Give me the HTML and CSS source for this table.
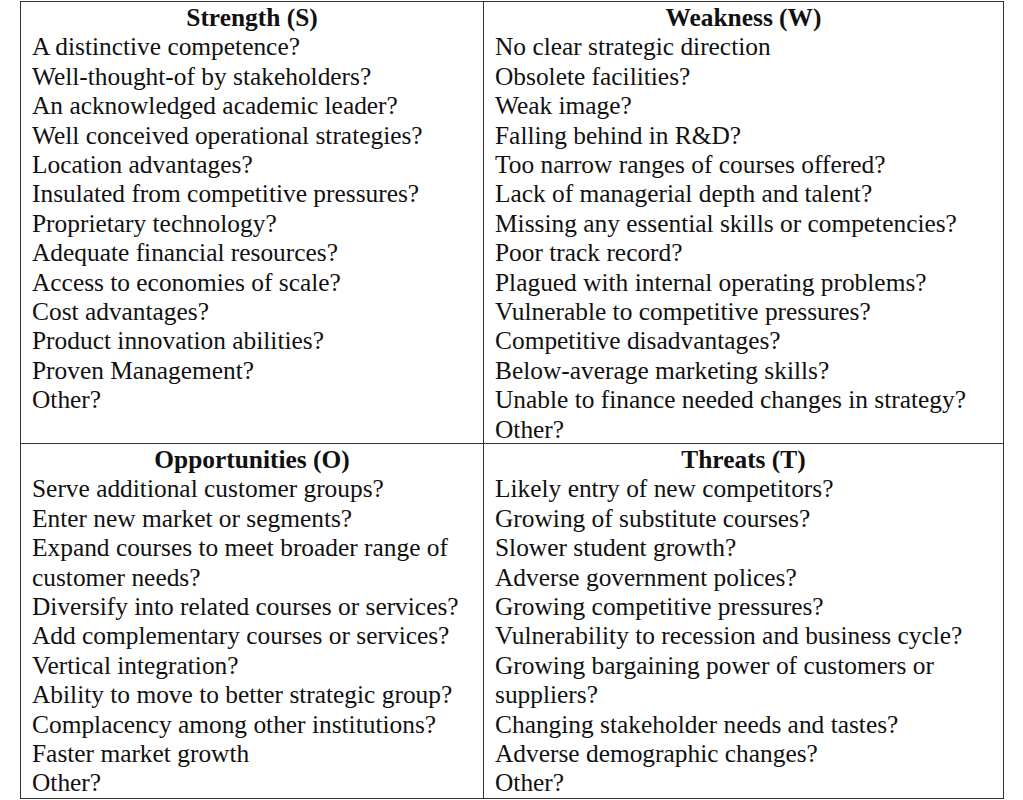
FILE: index.html
```html
<!DOCTYPE html>
<html lang="en">
<head>
<meta charset="utf-8">
<title>SWOT Analysis</title>
<link rel="stylesheet" href="styles.css">
</head>
<body>
<div class="swot">
  <div class="cell cell-left">
    <div class="head">Strength (S)</div>
    <div>A distinctive competence?</div>
    <div>Well-thought-of by stakeholders?</div>
    <div>An acknowledged academic leader?</div>
    <div>Well conceived operational strategies?</div>
    <div>Location advantages?</div>
    <div>Insulated from competitive pressures?</div>
    <div>Proprietary technology?</div>
    <div>Adequate financial resources?</div>
    <div>Access to economies of scale?</div>
    <div>Cost advantages?</div>
    <div>Product innovation abilities?</div>
    <div>Proven Management?</div>
    <div>Other?</div>
  </div>
  <div class="cell cell-right">
    <div class="head">Weakness (W)</div>
    <div>No clear strategic direction</div>
    <div>Obsolete facilities?</div>
    <div>Weak image?</div>
    <div>Falling behind in R&amp;D?</div>
    <div>Too narrow ranges of courses offered?</div>
    <div>Lack of managerial depth and talent?</div>
    <div>Missing any essential skills or competencies?</div>
    <div>Poor track record?</div>
    <div>Plagued with internal operating problems?</div>
    <div>Vulnerable to competitive pressures?</div>
    <div>Competitive disadvantages?</div>
    <div>Below-average marketing skills?</div>
    <div>Unable to finance needed changes in strategy?</div>
    <div>Other?</div>
  </div>
  <div class="cell cell-left">
    <div class="head">Opportunities (O)</div>
    <div>Serve additional customer groups?</div>
    <div>Enter new market or segments?</div>
    <div>Expand courses to meet broader range of customer needs?</div>
    <div>Diversify into related courses or services?</div>
    <div>Add complementary courses or services?</div>
    <div>Vertical integration?</div>
    <div>Ability to move to better strategic group?</div>
    <div>Complacency among other institutions?</div>
    <div>Faster market growth</div>
    <div>Other?</div>
  </div>
  <div class="cell cell-right">
    <div class="head">Threats (T)</div>
    <div>Likely entry of new competitors?</div>
    <div>Growing of substitute courses?</div>
    <div>Slower student growth?</div>
    <div>Adverse government polices?</div>
    <div>Growing competitive pressures?</div>
    <div>Vulnerability to recession and business cycle?</div>
    <div>Growing bargaining power of customers or suppliers?</div>
    <div>Changing stakeholder needs and tastes?</div>
    <div>Adverse demographic changes?</div>
    <div>Other?</div>
  </div>
</div>
</body>
</html>
```
FILE: styles.css
```css
html, body {
  margin: 0;
  padding: 0;
  background: #ffffff;
}
body {
  font-family: "Liberation Serif", "Times New Roman", serif;
  font-size: 25.4px;
  line-height: 29.4px;
  color: #111111;
}
.swot {
  display: grid;
  grid-template-columns: 463px 520px;
  grid-template-rows: 442px 355px;
  margin: 1px 0 0 20px;
  width: 983px;
  border-left: 1px solid #333333;
  border-top: 1px solid #333333;
  box-sizing: content-box;
}
.cell {
  box-sizing: border-box;
  border-right: 1px solid #333333;
  border-bottom: 1px solid #333333;
  padding: 1px 4px 0 11px;
  white-space: normal;
}
.cell-right {
  padding-left: 11px;
}
.head {
  font-weight: bold;
  text-align: center;
  padding-right: 7px;
}
```
